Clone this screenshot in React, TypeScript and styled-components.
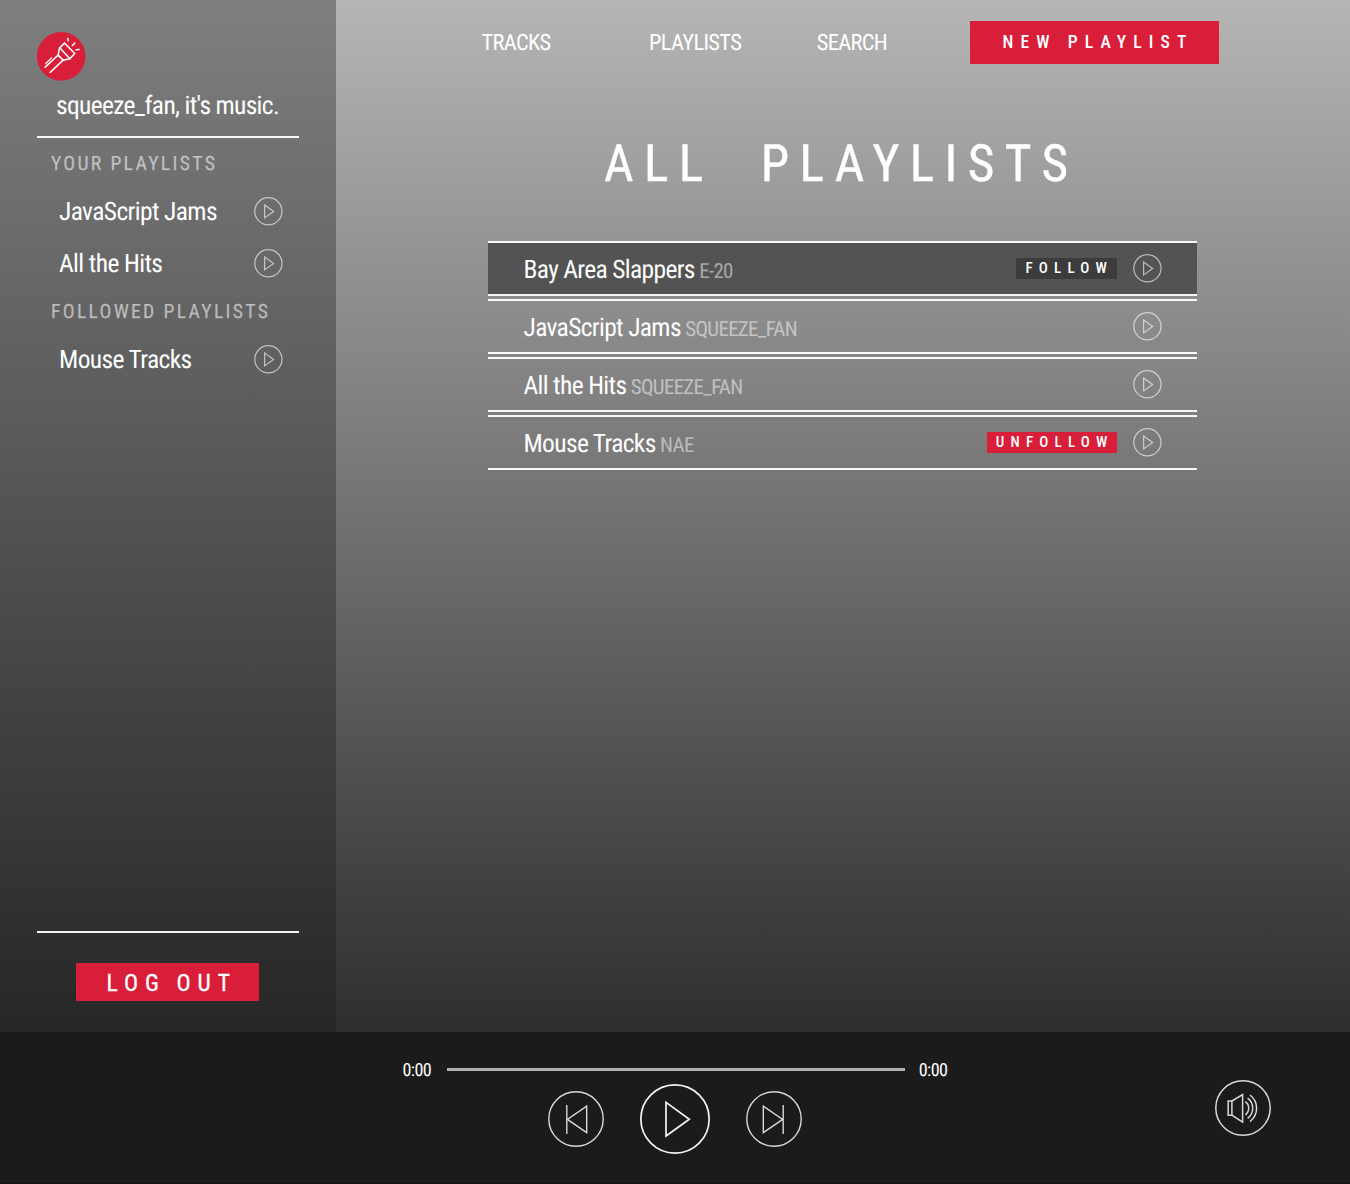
import React from "react";
import styled, { createGlobalStyle } from "styled-components";

const RED = "#d91e39";

const GlobalStyle = createGlobalStyle`
  *, *::before, *::after { box-sizing: border-box; }
  body {
    margin: 0;
    color: #fff;
    background: #1b1b1b;
    font-family: "Roboto Condensed", Roboto, sans-serif;
    letter-spacing: -0.62px;
    text-rendering: geometricPrecision;
  }
  button {
    margin: 0;
    padding: 0;
    border: 0;
    color: inherit;
    background: none;
    font-family: inherit;
    letter-spacing: inherit;
    cursor: pointer;
  }
  ul { margin: 0; padding: 0; list-style: none; }
  svg { display: block; }
`;

const Page = styled.div`
  display: flex;
  flex-direction: column;
  width: 1350px;
  height: 1184px;
  overflow: hidden;
  background: linear-gradient(#b5b5b5, #1a1a1a);
`;

const Upper = styled.div`
  display: flex;
  flex: 1;
  min-height: 0;
`;

/* ---------- sidebar ---------- */

const Sidebar = styled.aside`
  display: flex;
  flex: none;
  flex-direction: column;
  width: 335.5px;
  padding: 32px 36.5px 31px;
  background: rgba(26, 26, 26, 0.35);
`;

const Logo = styled.div`
  width: 49px;
  height: 49px;
`;

const Greeting = styled.div`
  height: 55px;
  line-height: 51px;
  font-size: 25.5px;
  letter-spacing: -0.68px;
  padding-left: 19.5px;
  white-space: nowrap;
`;

const Rule = styled.div`
  height: 2px;
  background: rgba(255, 255, 255, 0.95);
`;

const Library = styled.nav`
  flex: 1;
  padding-top: 3px;
`;

const GroupTitle = styled.h3`
  margin: 0;
  padding-left: 14.5px;
  height: 44px;
  line-height: 46px;
  font-size: 19.7px;
  font-weight: 400;
  letter-spacing: 2.3px;
  text-transform: uppercase;
  white-space: nowrap;
  color: rgba(255, 255, 255, 0.54);
  -webkit-text-stroke: 0.25px rgba(255, 255, 255, 0.4);
`;

const LibraryItem = styled.li`
  display: flex;
  align-items: center;
  justify-content: space-between;
  height: 52px;
  padding: 0 16px 0 22.5px;
  font-size: 25.5px;
`;

const ItemName = styled.span`
  padding-top: 2px;
  line-height: 32px;
`;

const LogOut = styled.button`
  align-self: center;
  width: 183px;
  height: 38px;
  margin-top: 30px;
  padding-left: 30.3px;
  text-align: left;
  line-height: 40px;
  font-size: 23.5px;
  letter-spacing: 7px;
  word-spacing: -2px;
  -webkit-text-stroke: 0.3px #fff;
  background: ${RED};
`;

/* ---------- main ---------- */

const Main = styled.main`
  flex: 1;
  min-width: 0;
  padding: 21px 131px 0 146px;
`;

const TopBar = styled.header`
  display: flex;
  height: 43px;
`;

const NavLink = styled.a`
  flex: none;
  width: 167.6px;
  line-height: 45px;
  font-size: 22.5px;
  letter-spacing: -0.7px;
  color: #fff;

  &:last-of-type {
    width: auto;
  }
`;

const NewPlaylist = styled.button`
  flex: none;
  width: 249px;
  height: 43px;
  margin-left: auto;
  padding-left: 32.5px;
  text-align: left;
  line-height: 41px;
  font-size: 17.6px;
  font-weight: 500;
  letter-spacing: 7.1px;
  white-space: nowrap;
  background: ${RED};
`;

const Title = styled.h1`
  margin: 59px 0 38px;
  padding-left: 122.5px;
  height: 80px;
  line-height: 82px;
  font-size: 51.3px;
  font-weight: 400;
  letter-spacing: 10.4px;
  word-spacing: 25px;
  white-space: nowrap;
  -webkit-text-stroke: 0.4px #fff;
`;

const Playlists = styled.ul`
  display: flex;
  flex-direction: column;
  gap: 3px;
  width: 709px;
  margin-left: 6.5px;
`;

const PlaylistRow = styled.li<{ $active?: boolean }>`
  display: flex;
  align-items: center;
  height: 55px;
  padding: 0 35.2px 0 35.5px;
  border: solid rgba(255, 255, 255, 0.95);
  border-width: 2px 0;
  background: ${(p) => (p.$active ? "#535353" : "transparent")};
  background-clip: padding-box;
`;

const PlaylistName = styled.div`
  flex: 1;
  height: 51px;
  line-height: 54px;
  font-size: 25.5px;
  letter-spacing: -0.66px;
  white-space: nowrap;
`;

const Owner = styled.span`
  margin-left: -0.8px;
  font-size: 20.9px;
  text-transform: uppercase;
  color: rgba(255, 255, 255, 0.5);
`;

const FollowButton = styled.button<{ $following?: boolean }>`
  width: ${(p) => (p.$following ? 130 : 101)}px;
  height: 21px;
  margin-right: 16px;
  padding-left: ${(p) => (p.$following ? 9 : 9.6)}px;
  text-align: left;
  line-height: 21px;
  font-size: 15px;
  font-weight: 500;
  letter-spacing: 6.2px;
  background: ${(p) => (p.$following ? RED : "#3c3c3c")};
`;

const IconButton = styled.button<{ $size: number }>`
  flex: none;
  width: ${(p) => p.$size}px;
  height: ${(p) => p.$size}px;
`;

/* ---------- player ---------- */

const Player = styled.footer`
  display: grid;
  grid-template-columns: 1fr 546px 1fr;
  height: 152px;
  padding-top: 26px;
  background: #1b1b1b;
  border-bottom: 1px solid #131313;
`;

const Deck = styled.div`
  grid-column: 2;
`;

const Timeline = styled.div`
  display: flex;
  align-items: flex-start;
  justify-content: space-between;
  height: 25px;
  padding-left: 0.5px;
`;

const Time = styled.span`
  width: 30px;
  line-height: 26px;
  font-size: 18.1px;
`;

const Track = styled.div`
  width: 458px;
  height: 3px;
  margin: 10px 14px 0 15px;
  flex: none;
  background: #b3afaf;
`;

const Controls = styled.div`
  display: flex;
  align-items: center;
  justify-content: center;
  gap: 36px;
  height: 71px;
`;

const VolumeSlot = styled.div`
  justify-self: end;
  padding: 22px 79px 0 0;
`;

/* ---------- icons ---------- */

const FlashlightIcon = () => (
  <svg width="49" height="49" viewBox="20.6 20.5 147 147">
    <circle cx="93" cy="93.5" r="73" fill={RED} />
    <g fill="none" stroke="#fff" strokeWidth="4.6" strokeLinecap="round" strokeLinejoin="round">
      <path d="M45 126 L84 90" />
      <path d="M60 142 L99 105" />
      <path d="M47 115 L64 98" strokeWidth="3.6" />
      <path d="M103 54 L134 85 L119 101 L99 105 L84 90 L88 69 Z" />
      <path d="M89 68 L119 101" />
      <path d="M113 40 L114 47" />
      <path d="M127 61 L134 54" />
      <path d="M138 74 L147 73" />
    </g>
  </svg>
);

const PlayIcon = ({ size, width, color }: { size: number; width: number; color: string }) => (
  <svg width={size} height={size} viewBox="0 0 70 70" fill="none" stroke={color} strokeWidth={width}>
    <circle cx="35" cy="35" r={35 - width / 2} />
    <path d="M26 18.4 V52 L49.3 35.2 Z" />
  </svg>
);

const SmallPlayIcon = () => (
  <svg width="29" height="29" viewBox="0 0 29 29" fill="none" stroke="#fff" strokeOpacity="0.6" strokeWidth="1.25">
    <circle cx="14.4" cy="14.3" r="13.6" />
    <path d="M10.6 8 V20.9 L19.6 14.45 Z" />
  </svg>
);

const SkipIcon = ({ back }: { back?: boolean }) => (
  <svg width="56" height="56" viewBox="0 0 56 56" fill="none" stroke="#d8d8d8" strokeWidth="1.4">
    <circle cx="28" cy="28" r="27.2" />
    <g transform={back ? "translate(56 0) scale(-1 1)" : undefined}>
      <path d="M17.3 15.2 V41.6 L36.6 28.4 Z" />
      <path d="M37.2 14 V43" />
    </g>
  </svg>
);

const VolumeIcon = () => (
  <svg width="56" height="56" viewBox="0 0 56 56" fill="none" stroke="#d8d8d8" strokeWidth="1.5">
    <circle cx="28" cy="28" r="27.2" />
    <path d="M13.2 21 H16.9 V35.2 H13.2 Z" />
    <path d="M16.9 21 L27.6 14.5 V42.2 L16.9 35.2" />
    <path d="M30.3 21.7 A8 8 0 0 1 30.3 34.8" />
    <path d="M32.6 18.2 A12.4 12.4 0 0 1 32.6 38.3" />
    <path d="M35 15 A16.6 16.6 0 0 1 35 41.5" />
  </svg>
);

/* ---------- data ---------- */

const library = [
  { title: "Your Playlists", items: ["JavaScript Jams", "All the Hits"] },
  { title: "Followed Playlists", items: ["Mouse Tracks"] },
];

const playlists = [
  { name: "Bay Area Slappers", owner: "e-20", action: "FOLLOW", active: true },
  { name: "JavaScript Jams", owner: "squeeze_fan" },
  { name: "All the Hits", owner: "squeeze_fan" },
  { name: "Mouse Tracks", owner: "nae", action: "UNFOLLOW" },
];

export default function App() {
  return (
    <Page>
      <GlobalStyle />
      <Upper>
        <Sidebar>
          <Logo>
            <FlashlightIcon />
          </Logo>
          <Greeting>squeeze_fan, it's music.</Greeting>
          <Rule />
          <Library>
            {library.map((group) => (
              <React.Fragment key={group.title}>
                <GroupTitle>{group.title}</GroupTitle>
                <ul>
                  {group.items.map((item) => (
                    <LibraryItem key={item}>
                      <ItemName>{item}</ItemName>
                      <IconButton $size={29} aria-label="Play">
                        <SmallPlayIcon />
                      </IconButton>
                    </LibraryItem>
                  ))}
                </ul>
              </React.Fragment>
            ))}
          </Library>
          <Rule />
          <LogOut>LOG OUT</LogOut>
        </Sidebar>
        <Main>
          <TopBar>
            <NavLink>TRACKS</NavLink>
            <NavLink>PLAYLISTS</NavLink>
            <NavLink>SEARCH</NavLink>
            <NewPlaylist>NEW PLAYLIST</NewPlaylist>
          </TopBar>
          <Title>ALL PLAYLISTS</Title>
          <Playlists>
            {playlists.map((p) => (
              <PlaylistRow key={p.name} $active={p.active}>
                <PlaylistName>
                  {p.name} <Owner>{p.owner}</Owner>
                </PlaylistName>
                {p.action && <FollowButton $following={p.action === "UNFOLLOW"}>{p.action}</FollowButton>}
                <IconButton $size={29} aria-label="Play">
                  <SmallPlayIcon />
                </IconButton>
              </PlaylistRow>
            ))}
          </Playlists>
        </Main>
      </Upper>
      <Player>
        <Deck>
          <Timeline>
            <Time>0:00</Time>
            <Track />
            <Time>0:00</Time>
          </Timeline>
          <Controls>
            <IconButton $size={56} aria-label="Previous">
              <SkipIcon back />
            </IconButton>
            <IconButton $size={70} aria-label="Play">
              <PlayIcon size={70} width={1.7} color="#f4f4f4" />
            </IconButton>
            <IconButton $size={56} aria-label="Next">
              <SkipIcon />
            </IconButton>
          </Controls>
        </Deck>
        <VolumeSlot>
          <IconButton $size={56} aria-label="Volume">
            <VolumeIcon />
          </IconButton>
        </VolumeSlot>
      </Player>
    </Page>
  );
}
